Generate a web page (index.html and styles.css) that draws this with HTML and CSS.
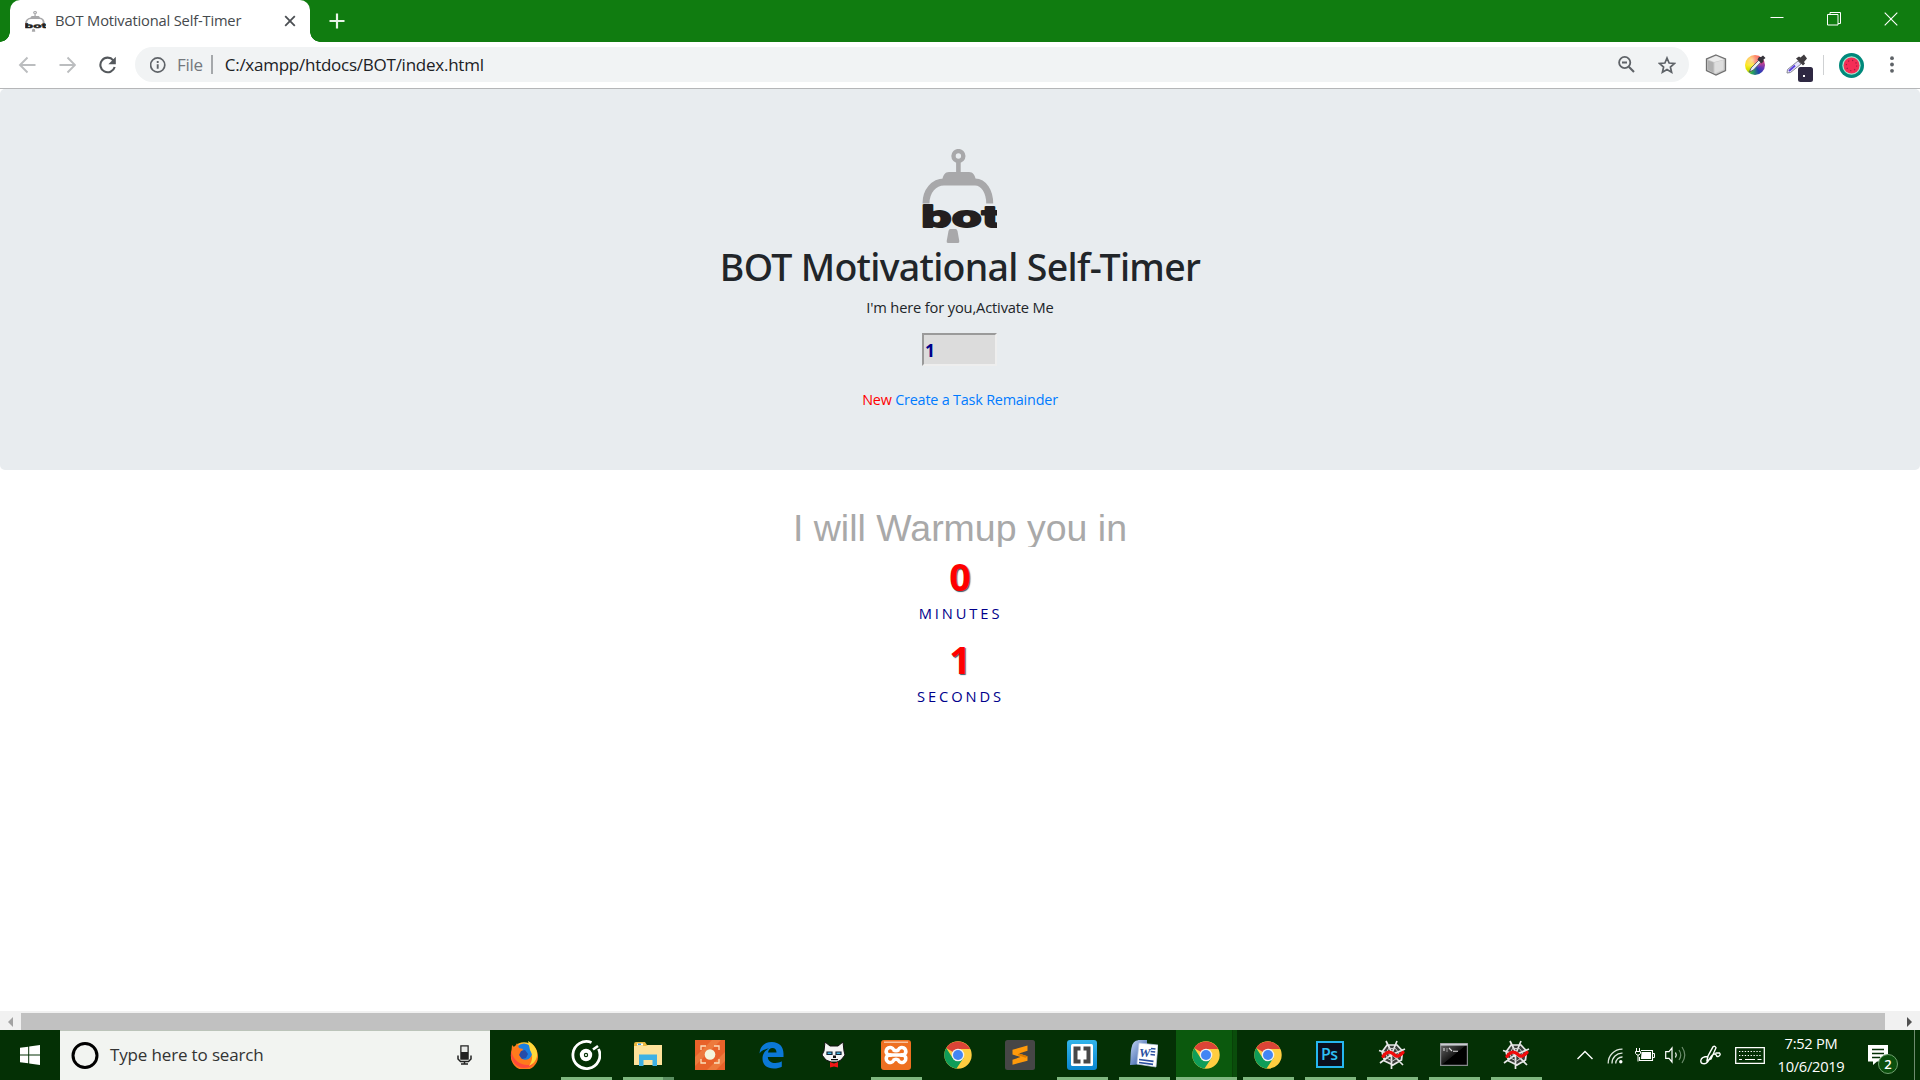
FILE: index.html
```html
<!DOCTYPE html>
<html lang="en">
<head>
<meta charset="utf-8">
<title>BOT Motivational Self-Timer</title>
<link rel="stylesheet" href="styles.css">
</head>
<body>
<svg width="0" height="0" class="defs">
  <defs>
    <linearGradient id="ff" x1="0.9" y1="0" x2="0.2" y2="1"><stop offset="0" stop-color="#fff04a"/><stop offset=".4" stop-color="#ff9a1e"/><stop offset=".75" stop-color="#ff4a35"/><stop offset="1" stop-color="#e3237a"/></linearGradient>
    <linearGradient id="br" x1="0" y1="0" x2="0" y2="1"><stop offset="0" stop-color="#32b4ea"/><stop offset="1" stop-color="#0a85cf"/></linearGradient>
    <linearGradient id="cmd" x1="0" y1="0" x2="1" y2="1"><stop offset="0" stop-color="#6a6a6a"/><stop offset=".5" stop-color="#1a1a1a"/><stop offset=".52" stop-color="#000"/></linearGradient>
    <linearGradient id="wd" x1="0" y1="0" x2="1" y2="1"><stop offset="0" stop-color="#c6d8f5"/><stop offset="1" stop-color="#1e4a9c"/></linearGradient>
    <symbol id="bot" viewBox="0 0 76 95">
      <g fill="none" stroke="#a8a8aa">
        <circle cx="36.4" cy="7" r="4.9" stroke-width="4.4"/>
        <path d="M36.4 12v13" stroke-width="4.6"/>
        <path d="M4 54.5C4 42 12 33 22 33h31c9 0 14.700 10 14.700 21.500" stroke-width="7"/>
      </g>
      <path fill="#a8a8aa" d="M20 32c1-6 3-9 7-9h20c4 0 6 3 7 9v4H20z"/>
      <path fill="#a8a8aa" d="M28.500 80h5q1.500 0 2 2l1.800 10q.3 2-1.300 2H26q-1.700 0-1.300-2l1.800-10q.3-2 2-2z"/>
      <text x="-1.500" y="77.500" class="bot-word" textLength="82" lengthAdjust="spacingAndGlyphs">bot</text>
    </symbol>
    <symbol id="chrome" viewBox="0 0 28 28">
      <circle cx="14" cy="14" r="13.700" fill="#ffcd40"/>
      <path fill="#db4437" d="M14 14 2.200 7A13.700 13.700 0 0 1 25.900 7.500L26 8H14z"/>
      <path fill="#0f9d58" d="M2.200 7A13.700 13.700 0 0 0 12.500 27.600L19.500 17 14 14 8.600 17z"/>
      <circle cx="14" cy="14" r="6.300" fill="#f1f1f1"/><circle cx="14" cy="14" r="5" fill="#4285f4"/>
    </symbol>
    <symbol id="web" viewBox="0 0 30 30">
      <path fill="#3b3f3b" d="M10 5h10l5.500 6-1 9-8.500 5-8.500-4L5 12z"/>
      <path fill="none" stroke="#e8e8e8" stroke-width="1.700" d="M10 5h10l5.500 6-1 9-8.500 5-8.500-4L5 12zM9 1l6 12 5-12M2 10.500l13 4L28 9M3 23l12-9 11 11M14.500 14v15"/>
      <path fill="none" stroke="#cfcfcf" stroke-width="1" d="M11.500 8.500h7l3 4-1 5.500-5 3-5-2.500-1.500-5z"/>
      <path fill="none" stroke="#f00b0b" stroke-width="3.200" stroke-linecap="round" d="M6 16.500c4-6 8-5 11-2s5 2 9-2"/>
    </symbol>
  </defs>
</svg>

<header class="tabs">
  <div class="tab">
    <svg class="fav" width="21" height="21" viewBox="0 0 76 95" preserveAspectRatio="none"><use href="#bot" width="76" height="95"/></svg>
    <span class="tab-title">BOT Motivational Self-Timer</span>
    <svg class="tab-x" width="12" height="12" viewBox="0 0 12 12"><path d="M1.200 1.200l9.600 9.600M10.800 1.200l-9.600 9.600" stroke="#4b4f53" stroke-width="1.800"/></svg>
  </div>
  <svg class="plus" width="16" height="16" viewBox="0 0 16 16"><path d="M8 .500v15M.500 8h15" stroke="#e9f5e9" stroke-width="2.200"/></svg>
  <div class="winbtns">
    <svg width="14" height="14" viewBox="0 0 14 14"><path d="M.500 5.500h13" stroke="#fff"/></svg>
    <svg width="14" height="14" viewBox="0 0 14 14"><path d="M.500 2.500h10.500v10.500H.500zM3 2.500v-2h10.500v11H11" fill="none" stroke="#fff"/></svg>
    <svg width="14" height="14" viewBox="0 0 14 14"><path d="M.700.700l12.600 12.600M13.300.700.700 13.300" stroke="#fff" stroke-width="1.100"/></svg>
  </div>
</header>

<nav class="toolbar">
  <svg width="18" height="18" viewBox="0 0 18 18"><path d="M17.500 9H2.500M9.500 1.500 2 9 9.500 16.500" fill="none" stroke="#bbbdbf" stroke-width="1.900"/></svg>
  <svg width="18" height="18" viewBox="0 0 18 18"><path d="M1.500 9h15M9.500 1.500 17 9 9.500 16.500" fill="none" stroke="#bbbdbf" stroke-width="1.900"/></svg>
  <svg width="18" height="18" viewBox="0 0 18 18"><path d="M15.300 4.300A7.300 7.300 0 1 0 16.700 11" fill="none" stroke="#54585c" stroke-width="2.100"/><path d="M17.800.800v7.400H10.400z" fill="#54585c"/></svg>
  <div class="omnibox">
    <svg width="16" height="16" viewBox="0 0 16 16"><circle cx="7.700" cy="8" r="7.100" fill="none" stroke="#5f6368" stroke-width="1.700"/><path d="M7.700 7.200v4.600M7.700 4v2" stroke="#5f6368" stroke-width="1.900"/></svg>
    <span class="scheme">File</span><i class="bar"></i><span class="url">C:/xampp/htdocs/BOT/index.html</span>
    <svg class="lens" width="17" height="17" viewBox="0 0 17 17"><path d="M10.800 10.800 16 16M4 6.500h5" stroke="#5f6368" stroke-width="2.100"/><circle cx="6.700" cy="6.500" r="5.600" fill="none" stroke="#5f6368" stroke-width="1.800"/></svg>
    <svg width="18" height="18" viewBox="0 0 18 18"><path d="M9 2l2.100 5 5.300.500-4 3.500 1.200 5.200L9 13.400l-4.600 2.800L5.600 11l-4-3.500L6.900 7z" fill="none" stroke="#5f6368" stroke-width="1.700"/></svg>
  </div>
  <div class="exts">
    <svg width="22" height="22" viewBox="0 0 22 22"><path d="M11 1l9.500 4v11.500L11 21l-9.500-4.500V5z" fill="#c9c9c9" stroke="#707070" stroke-width="1.300"/><path d="M11 2 19 5.500 9 8 3 5.500z" fill="#ececec"/><path d="M8.500 8.500v10.500L3 15.500V6.500z" fill="#b0b0b0"/><path d="M9.500 8.500l9-2.500v9.500l-9 4z" fill="#dedede"/></svg>
    <div class="wheel"><svg width="21" height="20" viewBox="0 0 21 20"><path d="M15 4 6 13l-1.500 4L8.500 15l8.500-9z" fill="#e9eef5" stroke="#444a55" stroke-width=".8"/><path d="M12.500 4.500l4 4 2-2V4.500l2-1.500-2.500-2.500-2 1.500h-2z" fill="#36343c"/></svg></div>
    <svg width="28" height="28" viewBox="0 0 28 28"><path d="M13 7 2.500 15.500l-.500 3.500 3.500-.5L16 10z" fill="#e4e2ff" stroke="#888894" stroke-width="1"/><path d="M10 11.500 4 17" stroke="#5a42dc" stroke-width="2"/><path d="M11 4.500l7 7 2-2-1-1.500 3-3.500L19 .500 15.500 3.500 14 2.500z" fill="#403c40"/><rect x="13" y="13" width="15" height="15" rx="2.500" fill="#2e2842"/><path d="M18 21h2v2h-2z" fill="#fff"/></svg>
    <i class="vsep"></i>
    <svg width="25" height="25" viewBox="0 0 25 25"><circle cx="12.500" cy="12.500" r="12.500" fill="#00897b"/><circle cx="12.500" cy="12.500" r="9.200" fill="#a8e6cf"/><circle cx="12.500" cy="12.500" r="8" fill="#f52d56"/><circle cx="12.500" cy="12.500" r="5.200" fill="none" stroke="#9f1d42" stroke-width="1.200" stroke-dasharray="1.200 2.880"/></svg>
    <svg class="more" width="4" height="17" viewBox="0 0 4 17"><g fill="#5f6368"><circle cx="2" cy="2.200" r="1.900"/><circle cx="2" cy="8.500" r="1.900"/><circle cx="2" cy="14.800" r="1.900"/></g></svg>
  </div>
</nav>

<main class="page">
  <section class="jumbotron">
    <svg class="logo" width="75" height="95" viewBox="0 0 75 95"><use href="#bot" width="76" height="95"/></svg>
    <h1>BOT Motivational Self-Timer</h1>
    <p class="lead">I'm here for you,Activate Me</p>
    <input class="minutes" type="text" value="1">
    <p class="task"><span class="new">New</span> <a>Create a Task Remainder</a></p>
  </section>
  <section class="timer">
    <div class="warm">I will Warmup you in</div>
    <div class="unit"><b>0</b><span>MINUTES</span></div>
    <div class="unit"><b>1</b><span>SECONDS</span></div>
  </section>
</main>

<div class="scroll"><i class="arr left"></i><div class="thumb"></div><i class="arr right"></i></div>

<footer class="taskbar">
  <div class="start"><svg width="20" height="20" viewBox="0 0 20 20"><path fill="#fff" d="M0 2.800 8.200 1.700v7.800H0zM9.200 1.500 20 0v9.500H9.200zM0 10.500h8.200v7.800L0 17.200zM9.200 10.500H20V20L9.200 18.500z"/></svg></div>
  <div class="search">
    <svg width="28" height="28" viewBox="0 0 28 28"><circle cx="14" cy="13.500" r="12" fill="none" stroke="#000" stroke-width="3"/></svg>
    <span>Type here to search</span>
    <svg class="mic" width="15" height="20" viewBox="0 0 15 20"><path d="M4 1h7v13H4z" fill="#222" stroke="#222" stroke-width="1.500"/><path d="M4.500 1.500h6v5.500h-6z" fill="#e8eae8"/><path d="M1 10.500v3.500l2.500 2.500h8L14 14v-3.500M7.500 16.500V19M4 19h7" fill="none" stroke="#222" stroke-width="1.500"/></svg>
  </div>
  <div class="tasks">
    <div class="t"><svg width="28" height="28" viewBox="0 0 28 28"><circle cx="14" cy="14.500" r="13.200" fill="url(#ff)"/><circle cx="14" cy="11" r="8.600" fill="#1b7fe0"/><path fill="#ff7a1c" d="M2 4l3 3 2-5 2 5 4 1-1 3 2 1-4 2c0 4 5 6 9 4 4-3 4-7 2-12l-1-4c5 2 8 8 8 14A13 13 0 0 1 1 15z"/><path fill="#ff4a3a" d="M1 10c-1 9 5 17 13 17 4 0 7-1 9-4-9 3-19-1-22-13z"/><path fill="#ffd83a" d="M18 0c6 3 10 9 9 15-1 5-4 8-8 10 4-6 4-11 1-16z"/><path fill="#274ca8" d="M11 10l4-1 3 4-2 4-4 1-3-4z"/></svg></div>
    <div class="t run"><svg width="30" height="30" viewBox="0 0 30 30"><path d="M20.500 2.500A13.500 13.500 0 1 0 27.500 9" fill="none" stroke="#fff" stroke-width="2.800"/><path d="M27 6l-5 3.500" stroke="#fff" stroke-width="2.600"/><circle cx="15" cy="15" r="4.200" fill="none" stroke="#fff" stroke-width="4"/><circle cx="15" cy="15" r="1.100" fill="#fff"/></svg></div>
    <div class="t run multi"><svg width="28" height="26" viewBox="0 0 28 26"><path fill="#e9b93f" d="M0 2q0-2 2-2h9l2 3h14v8H0z"/><path fill="#fff" d="M3 1.500h6v2H3z"/><path fill="#35a0dc" d="M4 1.500h3v1.500H4z"/><path fill="#fde29a" d="M0 4h12l2-1h14v20H0z"/><path fill="#3eb1e4" d="M5 12.500h18V24h-4.500v-6H9.500v6H5z"/></svg></div>
    <div class="t"><svg width="30" height="30" viewBox="0 0 30 30"><path fill="#e8622a" d="M0 0h30v30H0z"/><path fill="#f08a4a" d="M0 17 17 0h9L0 26zM12 30 30 12v9l-9 9z" opacity=".6"/><g fill="none" stroke="#fbe0bc" stroke-width="1.300"><path d="M6 10V6h5M19 6h5v4M6 19v4h5M24 19v4h-5"/></g><circle cx="15" cy="14.500" r="5.300" fill="#f4f6dc"/></svg></div>
    <div class="t"><svg width="25" height="28" viewBox="0 0 25 28"><path fill="#0b78d7" d="M.500 12.500C1 5 6 1 12.800 1 20.500 1 24.500 6 24.500 12.500V16H8.800c.2 4.200 3.600 6 7.500 6 2.700 0 4.800-.6 6.500-1.700v5.400c-2.300 1.200-4.800 1.800-8 1.800C8 27.500 3.500 24 3.500 17.500 3.500 13 6 9.500 10 7.500 5.500 8 2.500 9.800.500 12.500zM9 11.500h8.500C17.500 8.800 16.100 7 13.500 7 11 7 9.400 8.800 9 11.500z"/></svg></div>
    <div class="t"><svg class="up" width="26" height="27" viewBox="0 0 26 27"><path fill="#f4f4f4" stroke="#111" stroke-width="1" d="M4 1l5 4h8l5-4 1 9 1 4-4 5-4 2h-6l-5-2-4-5 2-4z"/><path fill="#45b4e0" stroke="#123" stroke-width="1.200" d="M6 11h5v2.500H6zM15 11h5v2.500h-5z"/><path fill="#111" d="M12 14.500h3V17h-3zM10 18h7v1.200h-7z"/><path fill="#f01616" d="M9 21l4 1.500 4-1.500v5.500l-4-1-4 1z"/></svg></div>
    <div class="t run"><svg width="30" height="30" viewBox="0 0 30 30"><rect width="30" height="30" rx="3" fill="#ee7021"/><path d="M3 1.500h24v1.500H3z" fill="#f9c09b"/><path d="M10.500 15h9M10.500 15a3.900 3.900 0 1 1 2-5.500M10.500 15a3.900 3.900 0 1 0 2 5.500M19.500 15a3.900 3.900 0 1 0-2-5.500M19.500 15a3.900 3.900 0 1 1-2 5.500M12 9.500q3 2.500 6 0M12 20.500q3-2.500 6 0" fill="none" stroke="#fff" stroke-width="3.600"/></svg></div>
    <div class="t"><svg width="28" height="28"><use href="#chrome"/></svg></div>
    <div class="t"><svg width="30" height="30" viewBox="0 0 30 30"><rect width="30" height="30" rx="2.500" fill="#464646"/><path fill="#ff9a0a" d="M22.500 5.500v5.300L14 13.500l8.500 2.700v4.600L7.500 24.800v-5l8-2.700-8-2.700V9.800z"/><path fill="#d97a00" d="M14 13.500l8.500 2.700-2 1.500-8-2.600z"/></svg></div>
    <div class="t run"><svg width="30" height="30" viewBox="0 0 30 30"><rect width="30" height="30" rx="3" fill="url(#br)"/><rect x="4" y="4" width="22" height="22" rx="1.500" fill="#fff"/><path fill="none" stroke="#484848" stroke-width="4" d="M13.500 8.500H8.500v13h5M16.500 8.500h5v13h-5"/></svg></div>
    <div class="t run"><svg class="up" width="28" height="28" viewBox="0 0 28 28"><path fill="url(#wd)" d="M2 6C3 2 6 0 10 0h7v24L0 25C1 19 0 12 2 6z"/><path fill="#fff" stroke="#b9c9e4" stroke-width=".7" d="M9 3l19 2-2 22-19-3z"/><text x="9" y="17" class="word-w">W</text><path d="M21 8.500l4.500.5M20.700 11.500l4.500.5M20.500 14.500l4.500.5M9 19.500l14.500 1.800M9 22.500l14 1.800" stroke="#2b50a0" stroke-width="1.700"/></svg></div>
    <div class="t run active"><svg width="28" height="28"><use href="#chrome"/></svg></div>
    <div class="t run"><svg width="28" height="28"><use href="#chrome"/></svg></div>
    <div class="t run"><svg class="up" width="28" height="27" viewBox="0 0 28 27"><path fill="#0b0f1e" stroke="#26b7f0" stroke-width="2" d="M1 1h26v25H1z"/><text x="5" y="18.700" class="ps">Ps</text></svg></div>
    <div class="t run"><svg width="30" height="30"><use href="#web"/></svg></div>
    <div class="t run"><svg class="up" width="28" height="23" viewBox="0 0 28 23"><path fill="url(#cmd)" stroke="#85898b" stroke-width="1.200" d="M.600.600h26.800v21.800H.600z"/><path fill="#c9cdd0" d="M.600.600h26.800v2H.600z"/><path d="M4 5v3M7 5.500v1M7 7.500v1M9 5l3 3M13 8.200h5" stroke="#ddd" stroke-width="1.100"/></svg></div>
    <div class="t run"><svg width="30" height="30"><use href="#web"/></svg></div>
  </div>
  <div class="tray">
    <svg width="18" height="10" viewBox="0 0 18 10"><path d="M1.500 9 9 1.500 16.500 9" fill="none" stroke="#fff" stroke-width="1.400"/></svg>
    <svg class="wifi" width="16" height="16" viewBox="0 0 16 16"><g fill="none" stroke="#dfe8df" stroke-width="1.300"><path d="M1.200 15.500A14 14 0 0 1 15.500 1.200"/><path d="M5 15.500A10 10 0 0 1 15.500 5.200M8.700 15.500a6.500 6.500 0 0 1 6.800-6.500"/></g><circle cx="13.800" cy="13.800" r="1.700" fill="#fff"/></svg>
    <svg class="bat" width="20" height="14" viewBox="0 0 20 14"><path d="M6 2.500h11.500v10H4.500V9" fill="none" stroke="#fff" stroke-width="1.100"/><path d="M18 5.500h1.500v4H18" fill="none" stroke="#fff"/><path d="M6.500 4H16v7H6z" fill="#fff"/><path d="M1.500 0v3M4.500 0v3M.500 3.500h5v1.800L4 7H2L.500 5.300zM3 7v6.500" fill="none" stroke="#fff"/></svg>
    <svg class="vol" width="21" height="18" viewBox="0 0 21 18"><path d="M.700 5.700h3.300L7 2v14l-3-3.700H.700z" fill="none" stroke="#fff" stroke-width="1.200"/><path d="M10.500 6.500q1.500 2.500 0 5" fill="none" stroke="#fff" stroke-width="1.200"/><path d="M14 4q3.500 5 0 10M17 1q5.500 8 0 16" fill="none" stroke="#6e8d6e" stroke-width="1.200"/></svg>
    <svg class="pen" width="21" height="20" viewBox="0 0 21 20"><path d="M7 15.500l1-4.500L13 1.800q2-1.500 3 1L11 14zM8 11.500Q1.500 11.500.800 15.500C.500 19 5 20 7.500 17s4-8 7-8 1 3 3.500 2.500 2.500-2.500 1.500-3.500h-4" fill="none" stroke="#fff" stroke-width="1.400"/></svg>
    <svg class="kbd" width="30" height="17" viewBox="0 0 30 17"><path d="M.700.700h28.600v15.600H.700z" fill="none" stroke="#fff" stroke-width="1.300"/><path d="M4 4.500h22M4 8.500h22" stroke="#fff" stroke-width="1.200" stroke-dasharray="1.300 1.600"/><path d="M4 12.500h3M10 12.500h10M22.500 12.500h4" stroke="#fff" stroke-width="1.200"/></svg>
    <div class="clock"><span>7:52 PM</span><span class="date">10/6/2019</span></div>
    <div class="note">
      <svg width="20" height="20" viewBox="0 0 20 20"><path d="M0 0h20v16.500H9L5 20v-3.500H0z" fill="#fff"/><path d="M4 4.500h12M4 8.500h12M4 12.500h8" stroke="#043005" stroke-width="1.300"/></svg>
      <span class="badge">2</span>
    </div>
    <i class="desk"></i>
  </div>
</footer>
</body>
</html>
```

FILE: styles.css
```css
* { box-sizing: border-box; }
html, body { margin: 0; height: 100%; overflow: hidden; }
body { display: flex; flex-direction: column; width: 1920px; height: 1080px; background: #fff; font-family: "Open Sans", "Noto Sans", sans-serif; color: #212529; }
svg { display: block; flex: none; }
span { white-space: nowrap; }
.defs { position: absolute; }
.bot-word { font: bold 29px "DejaVu Sans", sans-serif; fill: #231f20; stroke: #231f20; stroke-width: 2; stroke-linejoin: round; }

/* Tab strip */
.tabs { display: flex; height: 42px; background: #107c10; }
.tab { position: relative; display: flex; align-items: center; width: 300px; height: 42px; margin-left: 10px; padding: 0 14px 0 15px; background: #fff; border-radius: 10px 10px 0 0; }
.tab::before, .tab::after { content: ""; position: absolute; bottom: 0; width: 10px; height: 10px; }
.tab::before { left: -10px; background: radial-gradient(circle at 0 0, transparent 9.5px, #fff 10px); }
.tab::after { right: -10px; background: radial-gradient(circle at 100% 0, transparent 9.5px, #fff 10px); }
.tab-title { margin-left: 9px; font-size: 14.7px; letter-spacing: -0.18px; line-height: 22px; color: #45494d; margin-top: -2px; }
.tab-x { margin-left: auto; }
.plus { margin: 13px 0 0 19px; }
.winbtns { display: flex; gap: 43px; margin: 12px 22px 0 auto; }

/* Address bar */
.toolbar { display: flex; align-items: center; height: 47px; padding: 0 16px 0 18px; background: #fff; border-bottom: 1px solid #b5b6b8; }
.toolbar > svg { margin-right: 22px; margin-top: -1px; }
.omnibox { display: flex; align-items: center; width: 1554px; height: 35px; margin: -1px 0 0 -3px; padding: 0 13px 0 15px; border-radius: 18px; background: #f1f3f4; font-size: 17px; line-height: 24px; }
.scheme { margin-left: 11px; color: #74787d; letter-spacing: -.3px; }
.bar { width: 2px; height: 19px; margin: 0 12px 0 8px; background: #a5a8ab; }
.url { color: #202124; letter-spacing: -0.25px; }
.lens { margin-left: auto; margin-right: 23px; }
.exts { display: flex; align-items: center; margin-left: 16px; flex: 1; }
.wheel { width: 20px; height: 20px; margin: 0 20px 0 18px; border-radius: 50%; background: radial-gradient(circle at 35% 25%, rgba(255,255,255,.6), transparent 50%), conic-gradient(#ff5a2c, #e8477c 60deg, #6c36b8 110deg, #2340b0 150deg, #28a85c 200deg, #d8e000 235deg, #ffe600 270deg, #ffb000 320deg, #ff5a2c); }
.exts svg:nth-of-type(2) { margin-top: 5px; }
.vsep { width: 1px; height: 20px; margin: 0 15px 0 10px; background: #cfd1d3; }
.exts .more { margin-left: auto; margin-right: 10px; margin-top: -1px; }

/* Page */
.page { height: 922px; background: #fff; text-align: center; }
.jumbotron { display: flex; flex-direction: column; align-items: center; height: 381px; padding-top: 60px; background: #e8ecef; border-radius: 5px; }
.logo, .minutes { margin-right: 1px; }
h1 { margin: 1px 0 0; font: 500 37.5px/44px "Noto Sans", sans-serif; letter-spacing: -0.7px; }
.jumbotron p { margin: 0; font-size: 14.7px; line-height: 22px; letter-spacing: -0.17px; }
.jumbotron .lead { margin-top: 7px; }
.minutes { display: block; width: 75px; height: 33px; margin: 15px 1px 23px 0; padding: 1px; border: 2px solid; border-color: #9a9a9a #eee #eee #9a9a9a; background: #dcdcdc; color: #00008b; font: 700 17.500px/28px "Noto Sans", sans-serif; }
.jumbotron .task { font-size: 14.4px; letter-spacing: -0.2px; }
.new { color: #f00; }
.task a { color: #007bff; }
.timer { padding-top: 39px; }
.warm { height: 38px; overflow: hidden; font: 37.5px/38px "Liberation Sans", Arial, sans-serif; color: #a9a9a9; }
.unit { height: 83px; display: flex; flex-direction: column; align-items: center; }
.warm + .unit { margin-top: 10px; }
.unit b { font: 700 37.5px/40px "Noto Sans", sans-serif; color: #f00; text-shadow: 1px 1px 1px #456; }
.unit span { margin-top: 5px; margin-left: 1px; font-size: 14.7px; line-height: 22px; letter-spacing: 2.9px; color: #00008b; }

/* Horizontal scrollbar */
.scroll { display: flex; align-items: center; height: 19px; padding: 2px 0 0; background: #f1f1f1; }
.thumb { flex: 1; height: 17px; background: #c1c1c1; }
.arr { border: 5px solid transparent; }
.left { border-right-color: #a3a3a3; border-left-width: 0; margin: 0 8px; }
.right { border-left-color: #505050; border-right-width: 0; margin: 0 8px 0 22px; }

/* Taskbar */
.taskbar { display: flex; height: 50px; background: #043005; }
.start { display: flex; align-items: center; justify-content: center; width: 60px; }
.search { display: flex; align-items: center; width: 430px; padding: 0 18px 0 11px; background: #f2f4f1; border-top: 1px solid #bcc4ba; font-size: 17px; letter-spacing: -0.15px; color: #333; }
.search span { margin-left: 11px; line-height: 24px; margin-top: -1px; }
.mic { margin-left: auto; margin-top: -1px; }
.tasks { display: flex; margin-left: 3px; }
.t { display: flex; align-items: center; justify-content: center; width: 62px; padding-right: 1px; height: 50px; }
.up { margin-bottom: 2px; }
.run { background: linear-gradient(#7fb77f, #7fb77f) 6px 100% / 51px 3px no-repeat; }
.multi { background: linear-gradient(90deg, #7fb77f 40px, #5c8f62 40px) 6px 100% / 51px 3px no-repeat; }
.active { background: linear-gradient(#7fb77f, #7fb77f) 1px 100% / 61px 3px no-repeat, linear-gradient(90deg, transparent 1px, #0b590d 1px 57px, #084208 57px 58px, #0a4d0b 58px); padding-right: 0; }
.word-w { font: italic bold 13px "Liberation Serif", serif; fill: #2b50a0; }
.ps { font: 600 16px "Open Sans", sans-serif; letter-spacing: -.5px; fill: #2fc0f5; }
.tray { display: flex; align-items: center; margin-left: auto; width: 344px; }
.wifi { margin-left: 13px; margin-top: 2px; }
.bat { margin-left: 12px; margin-top: -1px; }
.vol { margin-left: 10px; }
.pen { margin-left: 14px; }
.kbd { margin-left: 14px; }
.clock { display: flex; flex-direction: column; align-items: center; width: 70px; margin-left: 11px; font-size: 14.7px; line-height: 23px; letter-spacing: -0.3px; color: #fff; }
.note { position: relative; margin-left: 22px; margin-top: -1px; }
.badge { position: absolute; left: 10px; top: 9px; width: 20px; height: 20px; border: 1px solid #6fa06f; border-radius: 50%; background: #0b4f0d; color: #fff; font: 600 13px/18px "Open Sans", sans-serif; text-align: center; }
.desk { width: 1px; height: 50px; margin-left: auto; margin-right: 5px; background: #6e8a6e; }
```
